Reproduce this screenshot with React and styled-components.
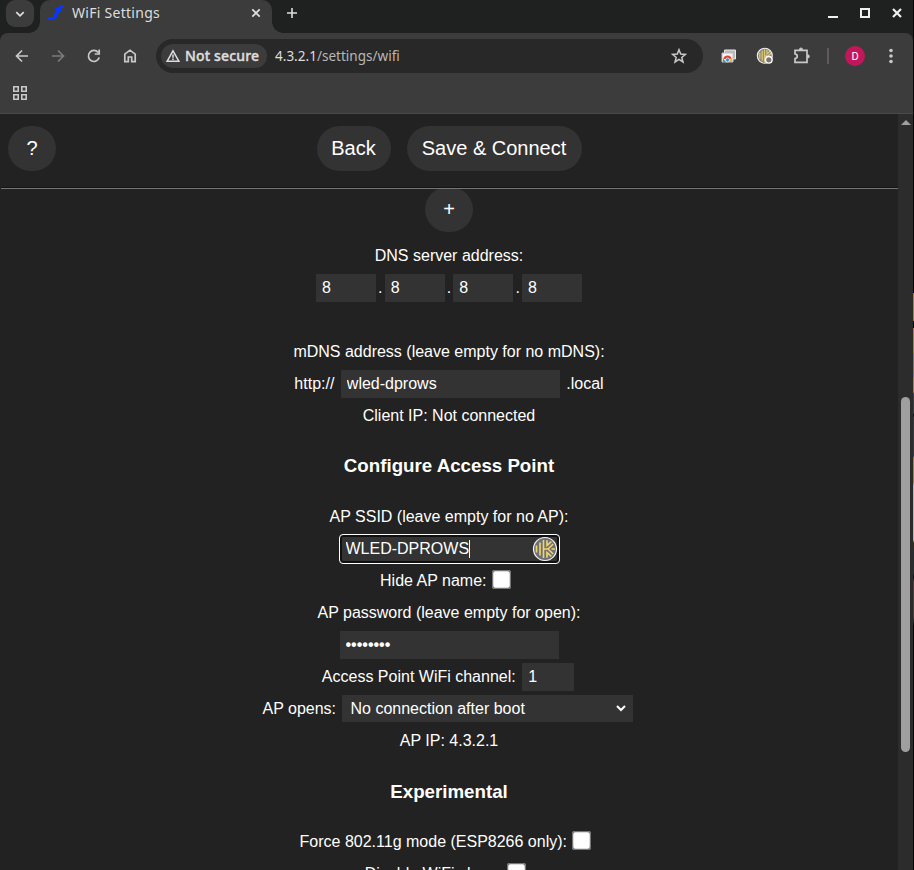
import React from "react";
import styled, { createGlobalStyle, css } from "styled-components";

const GlobalStyle = createGlobalStyle`
  *, *::before, *::after { box-sizing: border-box; }
  body { margin: 0; background: #000; overflow: hidden; }
`;

const Desktop = styled.div`
  display: grid;
  grid-template-columns: 913px 1px;
  width: 914px;
  height: 870px;
  overflow: hidden;
`;

const DesktopEdge = styled.div`
  background: linear-gradient(
    to bottom,
    #060606 0 293px, #a3851d 293px 321px, #0b0b0b 321px 328px,
    #a3851d 328px 352px, #77776c 354px 376px, #a3851d 378px 392px,
    #3c4042 394px 413px, #0b0b0b 415px, #34393a 418px 456px,
    #a3851d 458px 482px, #b5b5b5 486px 540px, #2f2f12 543px 546px,
    #2b2f30 550px 572px, #0b0b0b 577px, #4c3d3a 582px 617px, #060606 626px
  );
`;

const Window = styled.div`
  display: flex;
  flex-direction: column;
  height: 870px;
  overflow: hidden;
  background: #1f2120;
  font-family: "Noto Sans", "Open Sans", sans-serif;
`;

const TabStrip = styled.div`
  display: flex;
  flex: none;
  height: 33px;
  padding-left: 6px;
  color: #dedede;
`;

const TabSearch = styled.div`
  display: grid;
  place-items: center;
  width: 28px;
  height: 27px;
  border-radius: 9px;
  background: #3c3c3c;
  margin-right: 6px;
`;

const Tab = styled.div`
  position: relative;
  display: flex;
  align-items: center;
  width: 232px;
  height: 33px;
  padding: 0 10px 7px 8px;
  border-radius: 10px 10px 0 0;
  background: #3c3c3c;
  &::before, &::after {
    content: "";
    position: absolute;
    bottom: 0;
    width: 11px;
    height: 11px;
  }
  &::before {
    left: -11px;
    background: radial-gradient(circle at 0 0, transparent 10.5px, #3c3c3c 11px);
  }
  &::after {
    right: -11px;
    background: radial-gradient(circle at 100% 0, transparent 10.5px, #3c3c3c 11px);
  }
`;

const TabTitle = styled.span`
  flex: 1;
  margin-left: 8px;
  font-size: 14px;
  line-height: 26px;
  letter-spacing: 0.28px;
`;

const NewTab = styled.div`
  display: grid;
  place-items: center;
  width: 40px;
  height: 26px;
`;

const WindowControls = styled.div`
  display: flex;
  height: 26px;
  margin-left: auto;
`;

const WindowButton = styled.div`
  display: grid;
  place-items: center;
  width: 32px;
  color: #f0f0f0;
`;

const Toolbars = styled.div`
  flex: none;
  height: 81px;
  background: #3c3c3c;
  border-bottom: 1px solid #4a4a4a;
  border-radius: 8px 8px 0 0;
`;

const Toolbar = styled.div`
  display: flex;
  align-items: center;
  height: 46px;
  padding: 0 4px;
`;

const IconSlot = styled.div`
  display: grid;
  place-items: center;
  flex: none;
  width: ${(p) => p.$width || 36}px;
  height: 34px;
  color: ${(p) => (p.$dim ? "#7b7b7b" : "#c9c9c9")};
`;

const AddressBar = styled.div`
  display: flex;
  align-items: center;
  width: 547px;
  height: 34px;
  margin: 0 8px;
  padding: 0 6px 0 5px;
  border-radius: 17px;
  background: #282828;
`;

const SecurityChip = styled.div`
  display: flex;
  align-items: center;
  width: 106px;
  height: 24px;
  padding-left: 5px;
  gap: 5px;
  border-radius: 12px;
  background: #3c3c3c;
  color: #dedede;
  font-size: 14px;
  line-height: 22px;
  font-weight: 500;
  letter-spacing: 0.17px;
  white-space: nowrap;
  span { -webkit-text-stroke: 0.4px #dedede; }
`;

const Url = styled.span`
  flex: 1;
  margin-left: 8px;
  color: #b8b8b8;
  font-size: 13.5px;
  letter-spacing: 0.02px;
  b { color: #dedede; font-weight: 400; }
`;

const Avatar = styled.div`
  display: grid;
  place-items: center;
  width: 20px;
  height: 20px;
  border-radius: 50%;
  background: #c2185b;
  color: #fff;
  font: 400 11px Roboto, sans-serif;
`;

const Separator = styled.div`
  width: 2px;
  height: 16px;
  background: #5c5c5c;
`;

const BookmarkBar = styled.div`
  display: flex;
  align-items: center;
  height: 28px;
  padding-left: 2px;
`;

const Viewport = styled.div`
  display: grid;
  grid-template-columns: 898px 15px;
  flex: 1;
  min-height: 0;
`;

const Page = styled.main`
  height: 756px;
  overflow: hidden;
  background: #222;
  color: #fff;
  font: 16px/32px "Liberation Sans", Arial, sans-serif;
`;

const PageHeader = styled.header`
  display: grid;
  grid-template-columns: 48px 1fr 48px;
  align-items: start;
  height: 73px;
  padding: 12px 8px 0;
`;

const Actions = styled.div`
  display: flex;
  justify-content: center;
  gap: 16px;
`;

const Button = styled.button`
  width: ${(p) => p.$width}px;
  height: 45px;
  padding: 0;
  border: 0;
  border-radius: 24px;
  background: #333;
  color: #fff;
  font: 20px/45px "Liberation Sans", Arial, sans-serif;
`;

const Rule = styled.div`
  position: relative;
  height: 2px;
  margin-left: 1px;
  border-top: 1px solid #141414;
  border-bottom: 1px solid #757575;
`;

const AddRow = styled.div`
  display: flex;
  justify-content: center;
  margin-top: -2px;
  height: 53px;
`;

const Row = styled.div`
  display: flex;
  justify-content: center;
  align-items: center;
  gap: ${(p) => (p.$tight ? 0 : 4.45)}px;
  height: 32px;
  white-space: pre;
`;

const Dot = styled.span`
  width: 8.67px;
  text-align: center;
`;

const Heading = styled.h3`
  height: 69px;
  margin: 0;
  font-size: 18.72px;
  line-height: ${(p) => p.$leading || 68}px;
  text-align: center;
`;

const fieldStyle = css`
  height: 28px;
  border: 0;
  border-radius: 0;
  outline: 0;
  background: #333;
  color: #fff;
  font: 16px "Liberation Sans", Arial, sans-serif;
`;

const Field = styled.input`
  ${fieldStyle}
  width: ${(p) => p.$width}px;
  margin: 0 ${(p) => (p.$flush ? 0 : 2)}px;
  padding: 0 6px 1px;
  &[type="password"] { font-weight: 700; }
`;

const Select = styled.select`
  ${fieldStyle}
  width: 291px;
  height: 27px;
  margin: 0 2px 1px;
  padding: 0 4px;
  border-right: 4px solid #333;
`;

const Checkbox = styled.input.attrs({ type: "checkbox" })`
  width: 13px;
  height: 13px;
  margin: 0 10px 3px 4px;
  transform: scale(1.5);
`;

const FocusedField = styled.div`
  position: relative;
  display: flex;
  width: 221px;
  height: 30px;
  border: 1px solid #fff;
  border-radius: 4px;
  box-shadow: inset 0 0 0 2px #101010;
  background: #333;
  overflow: hidden;
  input { background: transparent; margin: 0; padding-left: 6px; }
  svg { position: absolute; right: 1px; top: 1px; }
`;

const Caret = styled.i`
  position: absolute;
  left: 129px;
  top: 5px;
  width: 1px;
  height: 18px;
  background: #fff;
`;

const Scrollbar = styled.div`
  display: flex;
  flex-direction: column;
  align-items: center;
  background: #2c2c2c;
`;

const ScrollArrow = styled.div`
  width: 0;
  height: 0;
  margin-top: 6px;
  border: 5px solid transparent;
  border-top: 0;
  border-bottom: 5px solid #9f9f9f;
`;

const ScrollThumb = styled.div`
  width: 9px;
  height: 355px;
  margin-top: 272px;
  border-radius: 5px;
  background: #9f9f9f;
`;

const Line = ({ size = 16, width = 1.7, children, ...rest }) => (
  <svg width={size} height={size} viewBox={`0 0 ${size} ${size}`} fill="none" stroke="currentColor" strokeWidth={width} {...rest}>
    {children}
  </svg>
);

const Favicon = () => (
  <svg width="16" height="16" viewBox="0 0 16 16" fill="#0637ff" shapeRendering="crispEdges">
    <path d="M11 0h5v3h-5zM8 3h5v3H8zM7 6h4v3H7zM5 8h4v4H5zM5 11h3v3H5zM0 12h5v3H0z" />
  </svg>
);

const PasswordBadge = () => (
  <svg width="26" height="26" viewBox="0 0 26 26" fill="none">
    <circle cx="13" cy="13" r="11.5" fill="#6d7078" stroke="#f4f4f4" strokeWidth="1.2" />
    <g stroke="#f3d66b" strokeWidth="1.6">
      <path d="M4.500 9.500v7M8 6.500v13M11.500 4v18" />
      <path d="M15 4.200v5.300l4.300-3.800M12 13h4l5.200-5M16 13l5.200 5M19.500 13H23M15 21.800v-5.300l4.300 3.800" />
    </g>
  </svg>
);

const PasswordExtension = () => (
  <svg width="18" height="18" viewBox="0 0 18 18" fill="none">
    <circle cx="8.800" cy="8.800" r="7.500" fill="#8b846f" stroke="#f0f0f0" strokeWidth="1.100" />
    <g stroke="#d8c67c" strokeWidth="1.300">
      <path d="M3.800 5.800v6M6.200 3.700v10M8.500 2.300v13M11 2.800v4l3-2.500M8.800 9h3l3.500-3" />
    </g>
    <circle cx="12.800" cy="12.800" r="3.300" fill="#77756c" stroke="#fff" strokeWidth="1.400" />
  </svg>
);

const RemoteTabs = () => (
  <svg width="16" height="14" viewBox="0 0 16 14">
    <path d="M3.500 1h11v9h-11z" fill="#bbb" stroke="#e9e9e9" />
    <path d="M1 4h11v9H1z" fill="#f5f5f5" stroke="#bdbdbd" />
    <path d="M2.300 10a4.300 4.300 0 0 1 8.400 0z" fill="#ea4335" />
    <path d="M2 9.500L5 13H2z" fill="#34a853" />
    <path d="M8 13l1-3.500h2V13z" fill="#fbbc04" />
    <circle cx="6.500" cy="11" r="2" fill="#4285f4" stroke="#fff" strokeWidth=".6" />
  </svg>
);

const Check = ({ label }) => (
  <Row>
    <span>{label}</span>
    <Checkbox />
  </Row>
);

const dns = ["8", "8", "8", "8"];

export default function App() {
  return (
    <Desktop>
      <GlobalStyle />
      <Window>
        <TabStrip>
          <TabSearch>
            <Line size={10} width={1.8}><path d="M1.300 3.200L5 6.800l3.700-3.600" /></Line>
          </TabSearch>
          <Tab>
            <Favicon />
            <TabTitle>WiFi Settings</TabTitle>
            <Line size={12} width={1.8}><path d="M2.300 2.300l7.400 7.400M9.700 2.300L2.300 9.700" /></Line>
          </Tab>
          <NewTab>
            <Line size={12} width={1.600}><path d="M6 1v10M1 6h10" /></Line>
          </NewTab>
          <WindowControls>
            <WindowButton><Line size={12} width={2}><path d="M1 10h10" /></Line></WindowButton>
            <WindowButton><Line size={12} width={2}><path d="M2 2h8v8H2z" /></Line></WindowButton>
            <WindowButton><Line size={12} width={2.200}><path d="M2 2l8 8M10 2l-8 8" /></Line></WindowButton>
          </WindowControls>
        </TabStrip>

        <Toolbars>
          <Toolbar>
            <IconSlot><Line><path d="M14 8H3M8 2.500L2.500 8 8 13.500" /></Line></IconSlot>
            <IconSlot $dim><Line><path d="M2 8h11M8 2.500L13.500 8 8 13.500" /></Line></IconSlot>
            <IconSlot><Line><path d="M13.200 9.500A5.500 5.500 0 1 1 12.200 4.500M13.200 1.500V6H8.700" /></Line></IconSlot>
            <IconSlot><Line><path d="M2.800 6.200L8 2.200l5.200 4v7.500H9.700V9H6.300v4.700H2.800z" /></Line></IconSlot>
            <AddressBar>
              <SecurityChip>
                <Line size={14} width={1.500}>
                  <path d="M7 1.800l5.800 10.400H1.200z" />
                  <path d="M7 5.500v3.200M7 9.500V11" />
                </Line>
                <span>Not secure</span>
              </SecurityChip>
              <Url><b>4.3.2.1</b>/settings/wifi</Url>
              <IconSlot>
                <Line width={1.500}><path d="M8 1.700l1.700 4.400 4.700.3-3.600 3 1.200 4.600L8 11.400 4 14l1.200-4.600-3.600-3 4.700-.3z" /></Line>
              </IconSlot>
            </AddressBar>
            <IconSlot><RemoteTabs /></IconSlot>
            <IconSlot><PasswordExtension /></IconSlot>
            <IconSlot>
              <Line size={18} width={1.700}>
                <path d="M3 3.300h12v12H3v-3.600c3-.5 3-4.300 0-4.800z" />
                <path d="M7.400 2.600a1.600 1.600 0 0 1 3.200 0zM15.700 7.800a1.600 1.600 0 0 1 0 3.200z" fill="currentColor" strokeWidth="1" />
              </Line>
            </IconSlot>
            <IconSlot $width={18}><Separator /></IconSlot>
            <IconSlot><Avatar>D</Avatar></IconSlot>
            <IconSlot>
              <svg width="4" height="16" fill="currentColor"><circle cx="2" cy="2.500" r="1.800" /><circle cx="2" cy="8" r="1.800" /><circle cx="2" cy="13.500" r="1.800" /></svg>
            </IconSlot>
          </Toolbar>
          <BookmarkBar>
            <IconSlot>
              <Line size={14} width={1.600}><path d="M.8.8h4.400v4.400H.8zM8.800.8h4.400v4.400H8.800zM.8 8.800h4.400v4.400H.8zM8.800 8.800h4.400v4.400H8.800z" /></Line>
            </IconSlot>
          </BookmarkBar>
        </Toolbars>

        <Viewport>
          <Page>
            <PageHeader>
              <Button $width={48}>?</Button>
              <Actions>
                <Button $width={74}>Back</Button>
                <Button $width={175}>Save &amp; Connect</Button>
              </Actions>
            </PageHeader>
            <Rule />
            <AddRow><Button $width={48}>+</Button></AddRow>
            <Row>DNS server address:</Row>
            <Row $tight>
              {dns.map((part, i) => (
                <React.Fragment key={i}>
                  {i > 0 && <Dot>.</Dot>}
                  <Field $width={60} $flush defaultValue={part} />
                </React.Fragment>
              ))}
            </Row>
            <Row />
            <Row>mDNS address (leave empty for no mDNS):</Row>
            <Row>
              <span>http://</span>
              <Field $width={219} defaultValue="wled-dprows" />
              <span>.local</span>
            </Row>
            <Row>Client IP: Not connected</Row>
            <Heading>Configure Access Point</Heading>
            <Row>AP SSID (leave empty for no AP):</Row>
            <Row>
              <FocusedField>
                <Field $width={190} defaultValue="WLED-DPROWS" />
                <Caret />
                <PasswordBadge />
              </FocusedField>
            </Row>
            <Check label="Hide AP name:" />
            <Row>AP password (leave empty for open):</Row>
            <Row><Field type="password" $width={219} defaultValue="password" /></Row>
            <Row>
              <span>Access Point WiFi channel:</span>
              <Field $width={52} defaultValue="1" />
            </Row>
            <Row>
              <span>AP opens:</span>
              <Select defaultValue="boot"><option value="boot">No connection after boot</option></Select>
            </Row>
            <Row>AP IP: 4.3.2.1</Row>
            <Heading $leading={70}>Experimental</Heading>
            <Check label="Force 802.11g mode (ESP8266 only):" />
            <Check label="Disable WiFi sleep:" />
          </Page>
          <Scrollbar>
            <ScrollArrow />
            <ScrollThumb />
          </Scrollbar>
        </Viewport>
      </Window>
      <DesktopEdge />
    </Desktop>
  );
}
